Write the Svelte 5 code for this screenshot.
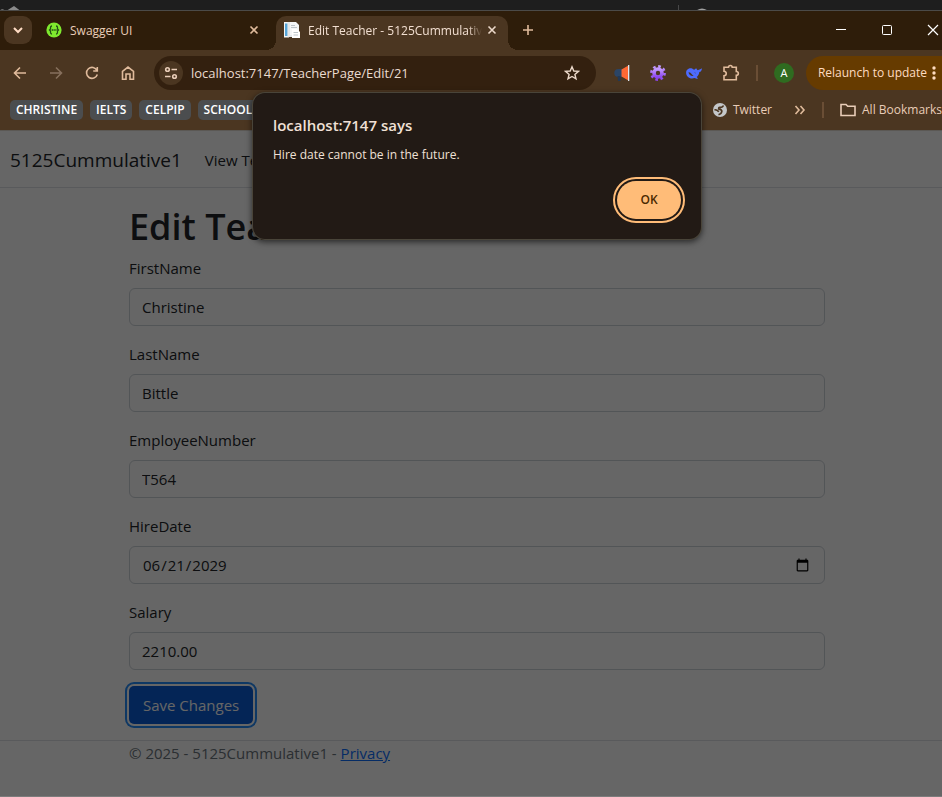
<script>
  const folders = ['CHRISTINE', 'IELTS', 'CELPIP', 'SCHOOL'];
  const fields = [
    { id: 'FirstName', type: 'text', value: 'Christine' },
    { id: 'LastName', type: 'text', value: 'Bittle' },
    { id: 'EmployeeNumber', type: 'text', value: 'T564' },
    { id: 'HireDate', type: 'date', value: '2029-06-21' },
    { id: 'Salary', type: 'text', value: '2210.00' }
  ];
</script>

<div class="screen">
  <div class="behind" aria-hidden="true">
    <svg width="942" height="10" viewBox="0 0 942 10">
      <path d="M0 10.500Q2 8 5 10.500zM7 10.500L14 6L20 10.500z" fill="#8a8a8a" />
      <path d="M678.500 5V10" stroke="#484848" />
      <path d="M697 11Q702 7.500 707 11" stroke="#a0a0a0" stroke-width="1.500" fill="none" />
    </svg>
  </div>

  <div class="window">
    <div class="tabs">
      <button class="search-tabs" aria-label="Search tabs">
        <svg width="12" height="12" viewBox="0 0 12 12"><path d="M2 4L6 8L10 4" class="line cream" /></svg>
      </button>
      <div class="tab">
        <svg width="16" height="16" viewBox="0 0 16 16">
          <circle cx="8" cy="8" r="7.600" fill="#7fea2e" />
          <path d="M6 4Q4.500 4 4.500 5.500V7L3.500 8L4.500 9V10.500Q4.500 12 6 12M10 4Q11.500 4 11.500 5.500V7L12.500 8L11.500 9V10.500Q11.500 12 10 12" fill="none" stroke="#234c16" stroke-width="1.300" />
          <path d="M5.700 8H10.500" stroke="#234c16" stroke-width="1.500" stroke-dasharray="1.300 .5" />
        </svg>
        <span class="title">Swagger UI</span>
        <button class="bare" aria-label="Close Swagger UI">
          <svg width="12" height="12" viewBox="0 0 12 12"><path d="M2.500 2.500L9.500 9.500M9.500 2.500L2.500 9.500" class="line" /></svg>
        </button>
      </div>
      <div class="tab active">
        <svg width="16" height="16" viewBox="0 0 16 16">
          <path d="M0 0H5V15.500H0z" fill="#f4f4f4" /><path d="M1 1.500H3.800V14H1z" fill="#55a5d8" />
          <path d="M3.500 0H9L11 2V15H3.500z" fill="#e3e7ea" /><path d="M6 0H12L15 3V13H6z" fill="#f5f6f7" />
          <path d="M8 7H13L16 10V16H8z" fill="#fff" /><path d="M7 3.500H11M7 5.500H13M9.500 10.500H14M9.500 13H14" stroke="#bdc4c9" />
        </svg>
        <span class="title fade">Edit Teacher - 5125Cummulative1</span>
        <button class="bare light" aria-label="Close Edit Teacher">
          <svg width="12" height="12" viewBox="0 0 12 12"><path d="M2.500 2.500L9.500 9.500M9.500 2.500L2.500 9.500" class="line" /></svg>
        </button>
      </div>
      <button class="bare new" aria-label="New tab">
        <svg width="12" height="12" viewBox="0 0 12 12"><path d="M6 1V11M1 6H11" class="line" /></svg>
      </button>
      <div class="controls">
        <button class="bare" aria-label="Minimize"><svg width="12" height="12" viewBox="0 0 12 12"><path d="M1 5.500H11" stroke="#fff" /></svg></button>
        <button class="bare" aria-label="Maximize"><svg width="12" height="12" viewBox="0 0 12 12"><rect x="1.500" y="1.500" width="9" height="9" rx="1" fill="none" stroke="#fff" /></svg></button>
        <button class="bare" aria-label="Close window"><svg width="12" height="12" viewBox="0 0 12 12"><path d="M1 1L11 11M11 1L1 11" stroke="#fff" stroke-width="1.200" /></svg></button>
      </div>
    </div>

    <div class="toolbar">
      <div class="nav-buttons">
        <button class="bare" aria-label="Back"><svg width="16" height="16" viewBox="0 0 16 16"><path d="M14 8H3M8 2.500L2.500 8L8 13.500" class="line" /></svg></button>
        <button class="bare" aria-label="Forward" disabled><svg width="16" height="16" viewBox="0 0 16 16"><path d="M2 8H13M8 2.500L13.500 8L8 13.500" class="line" /></svg></button>
        <button class="bare" aria-label="Reload"><svg width="16" height="16" viewBox="0 0 16 16"><path d="M13 5.500A5.500 5.500 0 1 0 13.300 9.500M13.300 2V6H9.200" class="line" /></svg></button>
        <button class="bare" aria-label="Home"><svg width="16" height="16" viewBox="0 0 16 16"><path d="M2.500 6.300L8 2L13.500 6.300V14.200H10V9H6V14.200H2.500z" class="line" /></svg></button>
      </div>
      <div class="omnibox">
        <button class="site" aria-label="View site information">
          <svg width="14" height="14" viewBox="0 0 14 14"><circle cx="3.500" cy="3.500" r="1.800" class="line" /><path d="M7.500 3.500H13M1 10.500H6.500" class="line" /><circle cx="10.500" cy="10.500" r="1.800" class="line" /></svg>
        </button>
        <input aria-label="Address" value="localhost:7147/TeacherPage/Edit/21" />
        <button class="bare light" aria-label="Bookmark this tab">
          <svg width="16" height="16" viewBox="0 0 16 16"><path d="M8 1.800L9.800 6L14.400 6.400L10.900 9.400L12 13.900L8 11.500L4 13.900L5.100 9.400L1.600 6.400L6.200 6z" class="line thin" /></svg>
        </button>
      </div>
      <div class="extensions">
        <button class="bare" aria-label="Megaphone extension"><svg width="16" height="16" viewBox="0 0 16 16"><path d="M8 4H4.500Q.3 4 .3 8T4.500 12H8z" fill="#2b4566" /><path d="M3.500 11H6.500V16H4z" fill="#233854" /><path d="M7.500 4.500L14 .8V15.200L7.500 11.500z" fill="#ff6834" /><path d="M14 0H15.300V16H14z" fill="#dce5ef" /></svg></button>
        <button class="bare" aria-label="Gear extension"><svg width="16" height="16" viewBox="0 0 16 16">
          <defs><linearGradient id="gear" x2="0" y2="1"><stop stop-color="#c49bff" /><stop offset="1" stop-color="#8c45f0" /></linearGradient></defs>
          <g fill="none" stroke="url(#gear)"><circle cx="8" cy="8" r="4" stroke-width="3.600" /><circle cx="8" cy="8" r="6.600" stroke-width="2.600" stroke-dasharray="2.590 2.590" /></g>
        </svg></button>
        <button class="bare" aria-label="Whale extension"><svg width="16" height="16" viewBox="0 0 16 16"><path d="M10.200 3.200C10.900 4.100 11 5 12 5.300C12.300 4.300 14.500 4.900 16 2.900C15.900 5.200 15 6.700 13.300 7.100C13.100 9.200 12.200 10.900 10.700 12L12 13.400C10.500 13.900 9.200 13.500 8.400 13.100C3.600 14.400.2 11.400.1 7.900C.1 4.400 3 2.900 5.400 3.300C6.500 3.400 6.600 4.300 7.700 4.600C9 4.900 8.900 3.600 10.200 3.200z" fill="#4d6bfe" /><path d="M2.500 7.200C4.500 7 5.700 9.200 7.600 11C4.900 11.300 2.800 9.700 2.500 7.200zM8.200 7.200Q9.800 7.200 9.700 8.800" fill="#4b3621" /></svg></button>
        <button class="bare" aria-label="Extensions"><svg width="18" height="18" viewBox="0 0 18 18"><path d="M2 3.300H6.500C6.500.8 10.200.8 10.200 3.300H14.300V7.500C17 7.500 17 11.300 14.300 11.300V15.800H2V11.800C5 11.400 5 7.500 2 7.200z" class="line" /></svg></button>
      </div>
      <span class="divider"></span>
      <button class="avatar" aria-label="Profile A">A</button>
      <button class="relaunch">Relaunch to update
        <svg width="4" height="16" viewBox="0 0 4 16"><g fill="#ffdcc0"><circle cx="2" cy="3" r="1.700" /><circle cx="2" cy="8" r="1.700" /><circle cx="2" cy="13" r="1.700" /></g></svg>
      </button>
    </div>

    <div class="bookmarks">
      {#each folders as name}<button class="chip">{name}</button>{/each}
      <div class="bookmarks-end">
        <a class="mark" href="#twitter"><svg width="14" height="14" viewBox="0 0 14 14"><circle cx="7" cy="7" r="7" fill="#c4c7c9" /><path d="M10.500 2.500Q9.500 4.800 7 4.300Q5 4.500 6 6.200Q9 6.500 8.800 8.500Q8.500 10.800 5.500 11.800M1.500 6.800Q4 6.500 5.800 8.800" fill="none" stroke="#4b3621" stroke-width="1.700" /></svg>Twitter</a>
        <button class="bare more" aria-label="More bookmarks"><svg width="12" height="12" viewBox="0 0 12 12"><path d="M1.500 2L5 6L1.500 10M6.500 2L10 6L6.500 10" class="line" /></svg></button>
        <span class="divider"></span>
        <button class="mark all"><svg width="16" height="14" viewBox="0 0 16 14"><path d="M1 12.500V1.500H6L7.700 3.200H15V12.500z" class="line" /></svg>All Bookmarks</button>
      </div>
    </div>

    <div class="page">
      <header>
        <a class="brand" href="#home">5125Cummulative1</a>
        <a href="#teachers">View Teachers</a>
      </header>
      <main>
        <h1>Edit Teacher</h1>
        <form>
          {#each fields as f}
            <div class="field">
              <label for={f.id}>{f.id}</label>
              <input id={f.id} type={f.type} value={f.value} />
            </div>
          {/each}
          <button class="save" type="button">Save Changes</button>
        </form>
      </main>
      <footer><p>© 2025 - 5125Cummulative1 - <a href="#privacy">Privacy</a></p></footer>
    </div>

    <div class="dialog" role="alertdialog" aria-labelledby="alert-title" aria-describedby="alert-text">
      <h2 id="alert-title">localhost:7147 says</h2>
      <p id="alert-text">Hire date cannot be in the future.</p>
      <button>OK</button>
    </div>
  </div>
</div>

<style>
  :global(body) { background: #666; }
  .screen, .screen * { box-sizing: border-box; }
  .screen {
    min-height: 100vh;
    display: flex;
    flex-direction: column;
    overflow: hidden;
    font-family: "Segoe UI", "Open Sans", "Noto Sans", sans-serif;
    font-size: 12px;
    color: #e9cdb8;
  }
  button, input { font: inherit; color: inherit; border: 0; margin: 0; padding: 0; background: none; }
  a { color: inherit; text-decoration: none; }
  h1, h2, p { margin: 0; }
  svg { display: block; flex: none; }
  .line { fill: none; stroke: currentColor; stroke-width: 1.6; }
  .thin { stroke-width: 1.4; }
  .cream { stroke: #ffdcc4; stroke-width: 2; }
  .behind { height: 10px; background: #1e1e1e; overflow: hidden; }
  /* The window runs a little past the right edge of the screen. */
  .window {
    position: relative;
    flex: 1;
    width: calc(100% + 12px);
    display: flex;
    flex-direction: column;
    border-top: 1px solid #4b4a48;
    background: #4b3621;
  }
  .bare { display: flex; align-items: center; justify-content: center; color: #e0bb9c; }
  .bare:disabled { color: #86705d; }
  .light { color: #ecd9ca; }

  .tabs { height: 39px; padding: 5px 0 0 4px; display: flex; background: #2e1d0a; }
  .search-tabs { width: 28px; height: 28px; border-radius: 9px; background: #4b3621; display: flex; align-items: center; justify-content: center; }
  .tab { width: 232px; height: 28px; margin-left: 12px; padding: 0 16px 0 2px; display: flex; align-items: center; gap: 8px; }
  .title { flex: 1; min-width: 0; overflow: hidden; white-space: nowrap; }
  .tab.active { position: relative; height: 34px; margin-left: 0; padding: 0 10px 6px 8px; border-radius: 10px 10px 0 0; background: #4b3621; color: #f2dfd1; }
  .tab.active::before, .tab.active::after { content: ""; position: absolute; bottom: 0; width: 10px; height: 10px; }
  .tab.active::before { right: 100%; background: radial-gradient(circle at 0 0, transparent 10px, #4b3621 10px); }
  .tab.active::after { left: 100%; background: radial-gradient(circle at 100% 0, transparent 10px, #4b3621 10px); }
  .fade { margin-right: -4px; mask-image: linear-gradient(90deg, #000 92%, transparent); }
  .new { width: 28px; height: 28px; margin-left: 6px; }
  .controls { margin: 0 -2px 0 auto; display: flex; }
  .controls button { width: 46px; height: 28px; }

  .toolbar { height: 45px; padding: 0 0 0 12px; display: flex; align-items: center; }
  .nav-buttons { display: flex; gap: 20px; }
  .omnibox { flex: 1; height: 34px; margin-left: 18px; padding: 0 16px 0 5px; border-radius: 17px; background: #33200f; display: flex; align-items: center; gap: 8px; }
  .omnibox input { flex: 1; min-width: 0; font-size: 13px; outline: 0; color: #eadbd0; }
  .site { width: 24px; height: 24px; border-radius: 50%; background: #4b3621; display: flex; align-items: center; justify-content: center; }
  .extensions { margin-left: 18px; display: flex; align-items: center; gap: 20px; }
  .divider { width: 2px; height: 16px; background: #6a4e35; }
  .toolbar > .divider { margin: 0 16px; }
  .avatar { width: 20px; height: 20px; border-radius: 50%; background: #2f6b20; color: #fff; font-size: 11px; }
  .relaunch { height: 34px; margin-left: 12px; padding: 0 18px 0 12px; border-radius: 17px 0 0 17px; background: #663b00; color: #ffdcc0; display: flex; align-items: center; gap: 5px; white-space: nowrap; }

  .bookmarks { height: 35px; padding: 0 12px 6px 10px; display: flex; align-items: center; gap: 7px; }
  .chip { height: 20px; padding: 0 6px; border-radius: 5px; background: #4b4d4f; color: #fff; font-weight: 600; line-height: 20px; }
  .bookmarks-end { margin-left: auto; display: flex; align-items: center; }
  .mark { display: flex; align-items: center; gap: 6px; white-space: nowrap; }
  .more { margin: 0 16px 0 22px; }
  .all { margin-left: 16px; }

  .page { position: relative; flex: 1; background: #fff; color: #212529; font-size: 15px; line-height: 24px; border-top: 1px solid #5b5854; border-bottom: 1px solid #7c7c7c; }
  .page::after { content: ""; position: absolute; inset: 0; background: rgb(0 0 0 / 60%); }
  header { height: 57px; padding: 2px 0 0 10px; display: flex; align-items: center; gap: 23px; border-bottom: 1px solid #dee2e6; }
  .brand { font-size: 19px; }
  main, footer p { width: 720px; max-width: 100%; margin: 0 auto; padding: 0 12px; }
  main { padding-top: 14px; padding-bottom: 16px; }
  h1 { font-size: 36px; line-height: 50px; font-weight: 600; margin-bottom: 4px; }
  form { display: flex; flex-direction: column; gap: 16px; }
  .field { display: flex; flex-direction: column; gap: 8px; }
  .field input { height: 38px; padding: 0 12px; border: 1px solid #ced4da; border-radius: 6px; }
  .save { align-self: flex-start; height: 38px; padding: 0 14px; border-radius: 5px; background: #0b5ed7; color: #fff; box-shadow: 0 0 0 2px #fff, 0 0 0 4px #258cfb; }
  footer { border-top: 1px solid #dee2e6; color: #6c757d; }
  footer a { color: #0d6efd; text-decoration: underline; }

  .dialog { position: absolute; top: 82px; left: 50%; width: 448px; height: 146px; transform: translateX(-50%); padding: 20px; border-radius: 12px; background: #221a15; box-shadow: 0 0 0 1px #494439, 0 2px 6px 1px rgb(0 0 0 / 60%); color: #f0e0d6; font-size: 12px; line-height: 20px; }
  .dialog h2 { font-size: 15px; line-height: 24px; font-weight: 600; margin-bottom: 8px; }
  .dialog button { position: absolute; right: 20px; bottom: 20px; width: 64px; height: 38px; border-radius: 19px; background: #ffbc78; color: #4a2800; font-weight: 600; outline: 2px solid #ffbc78; outline-offset: 2px; }
</style>
